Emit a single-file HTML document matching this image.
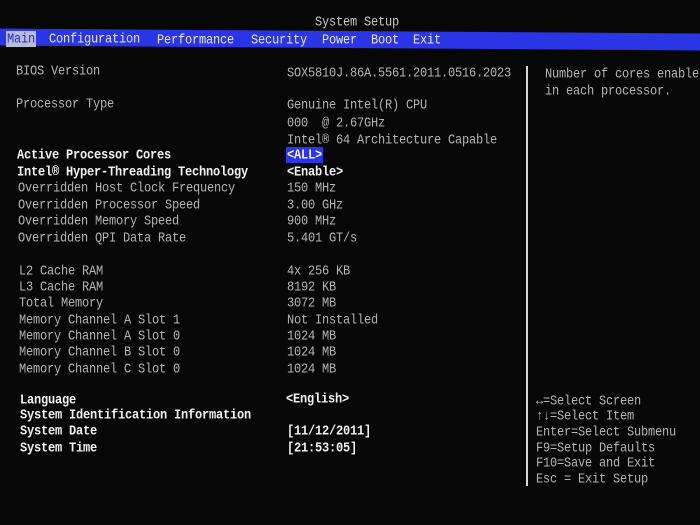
<!DOCTYPE html>
<html><head><meta charset="utf-8"><style>
body{margin:0;width:700px;height:525px;background:#070707;overflow:hidden;position:relative;font-family:"Liberation Mono","DejaVu Sans Mono",monospace;font-size:12px;color:#b4b4b4}
div.t{position:absolute;line-height:14px;white-space:pre;letter-spacing:-0.2px;transform:scaleY(1.15);transform-origin:0 50%}
.w{color:#f2f2f2;font-weight:bold}
.bar{position:absolute;left:0;top:31px;width:700px;height:17px;background:#2a35e6;transform:skewY(0.4deg)}
.m{color:#e8e8f0}
</style></head><body>
<div class="bar"></div>
<div class="t" style="left:315px;top:15px;color:#c8c8c8">System Setup</div>
<div class="t" style="left:6px;top:32px;background:#b8bcd8;color:#2030d0;padding:0 1px">Main</div>
<div class="t m" style="left:49px;top:32px">Configuration</div>
<div class="t m" style="left:157px;top:33px">Performance</div>
<div class="t m" style="left:251px;top:33px">Security</div>
<div class="t m" style="left:322px;top:33px">Power</div>
<div class="t m" style="left:371px;top:33px">Boot</div>
<div class="t m" style="left:413px;top:33px">Exit</div>
<div style="position:absolute;left:526px;top:66px;width:2px;height:420px;background:#d8d8d8"></div>

<div class="t" style="left:16px;top:64px">BIOS Version</div>
<div class="t" style="left:287px;top:66px">SOX5810J.86A.5561.2011.0516.2023</div>
<div class="t" style="left:16px;top:97px">Processor Type</div>
<div class="t" style="left:287px;top:98px">Genuine Intel(R) CPU</div>
<div class="t" style="left:287px;top:116px">000  @ 2.67GHz</div>
<div class="t" style="left:287px;top:133px">Intel® 64 Architecture Capable</div>
<div class="t w" style="left:17px;top:148px">Active Processor Cores</div>
<div class="t w" style="left:286px;top:148px;background:#2a35e6;padding:0 1px">&lt;ALL&gt;</div>
<div class="t w" style="left:17px;top:165px">Intel® Hyper-Threading Technology</div>
<div class="t w" style="left:287px;top:165px">&lt;Enable&gt;</div>
<div class="t" style="left:18px;top:181px">Overridden Host Clock Frequency</div>
<div class="t" style="left:287px;top:181px">150 MHz</div>
<div class="t" style="left:18px;top:198px">Overridden Processor Speed</div>
<div class="t" style="left:287px;top:198px">3.00 GHz</div>
<div class="t" style="left:18px;top:214px">Overridden Memory Speed</div>
<div class="t" style="left:287px;top:214px">900 MHz</div>
<div class="t" style="left:18px;top:231px">Overridden QPI Data Rate</div>
<div class="t" style="left:287px;top:231px">5.401 GT/s</div>
<div class="t" style="left:19px;top:264px">L2 Cache RAM</div>
<div class="t" style="left:287px;top:264px">4x 256 KB</div>
<div class="t" style="left:19px;top:280px">L3 Cache RAM</div>
<div class="t" style="left:287px;top:280px">8192 KB</div>
<div class="t" style="left:19px;top:296px">Total Memory</div>
<div class="t" style="left:287px;top:296px">3072 MB</div>
<div class="t" style="left:19px;top:313px">Memory Channel A Slot 1</div>
<div class="t" style="left:287px;top:313px">Not Installed</div>
<div class="t" style="left:19px;top:329px">Memory Channel A Slot 0</div>
<div class="t" style="left:287px;top:329px">1024 MB</div>
<div class="t" style="left:19px;top:345px">Memory Channel B Slot 0</div>
<div class="t" style="left:287px;top:345px">1024 MB</div>
<div class="t" style="left:19px;top:362px">Memory Channel C Slot 0</div>
<div class="t" style="left:287px;top:362px">1024 MB</div>
<div class="t w" style="left:20px;top:393px">Language</div>
<div class="t w" style="left:286px;top:392px">&lt;English&gt;</div>
<div class="t w" style="left:20px;top:408px">System Identification Information</div>
<div class="t w" style="left:20px;top:424px">System Date</div>
<div class="t w" style="left:287px;top:424px">[11/12/2011]</div>
<div class="t w" style="left:20px;top:441px">System Time</div>
<div class="t w" style="left:287px;top:441px">[21:53:05]</div>

<div class="t" style="left:545px;top:67px">Number of cores enable</div>
<div class="t" style="left:545px;top:84px">in each processor.</div>
<div class="t" style="left:536px;top:394px">↔=Select Screen</div>
<div class="t" style="left:536px;top:409px">↑↓=Select Item</div>
<div class="t" style="left:536px;top:425px">Enter=Select Submenu</div>
<div class="t" style="left:536px;top:441px">F9=Setup Defaults</div>
<div class="t" style="left:536px;top:456px">F10=Save and Exit</div>
<div class="t" style="left:536px;top:472px">Esc = Exit Setup</div>
</body></html>
